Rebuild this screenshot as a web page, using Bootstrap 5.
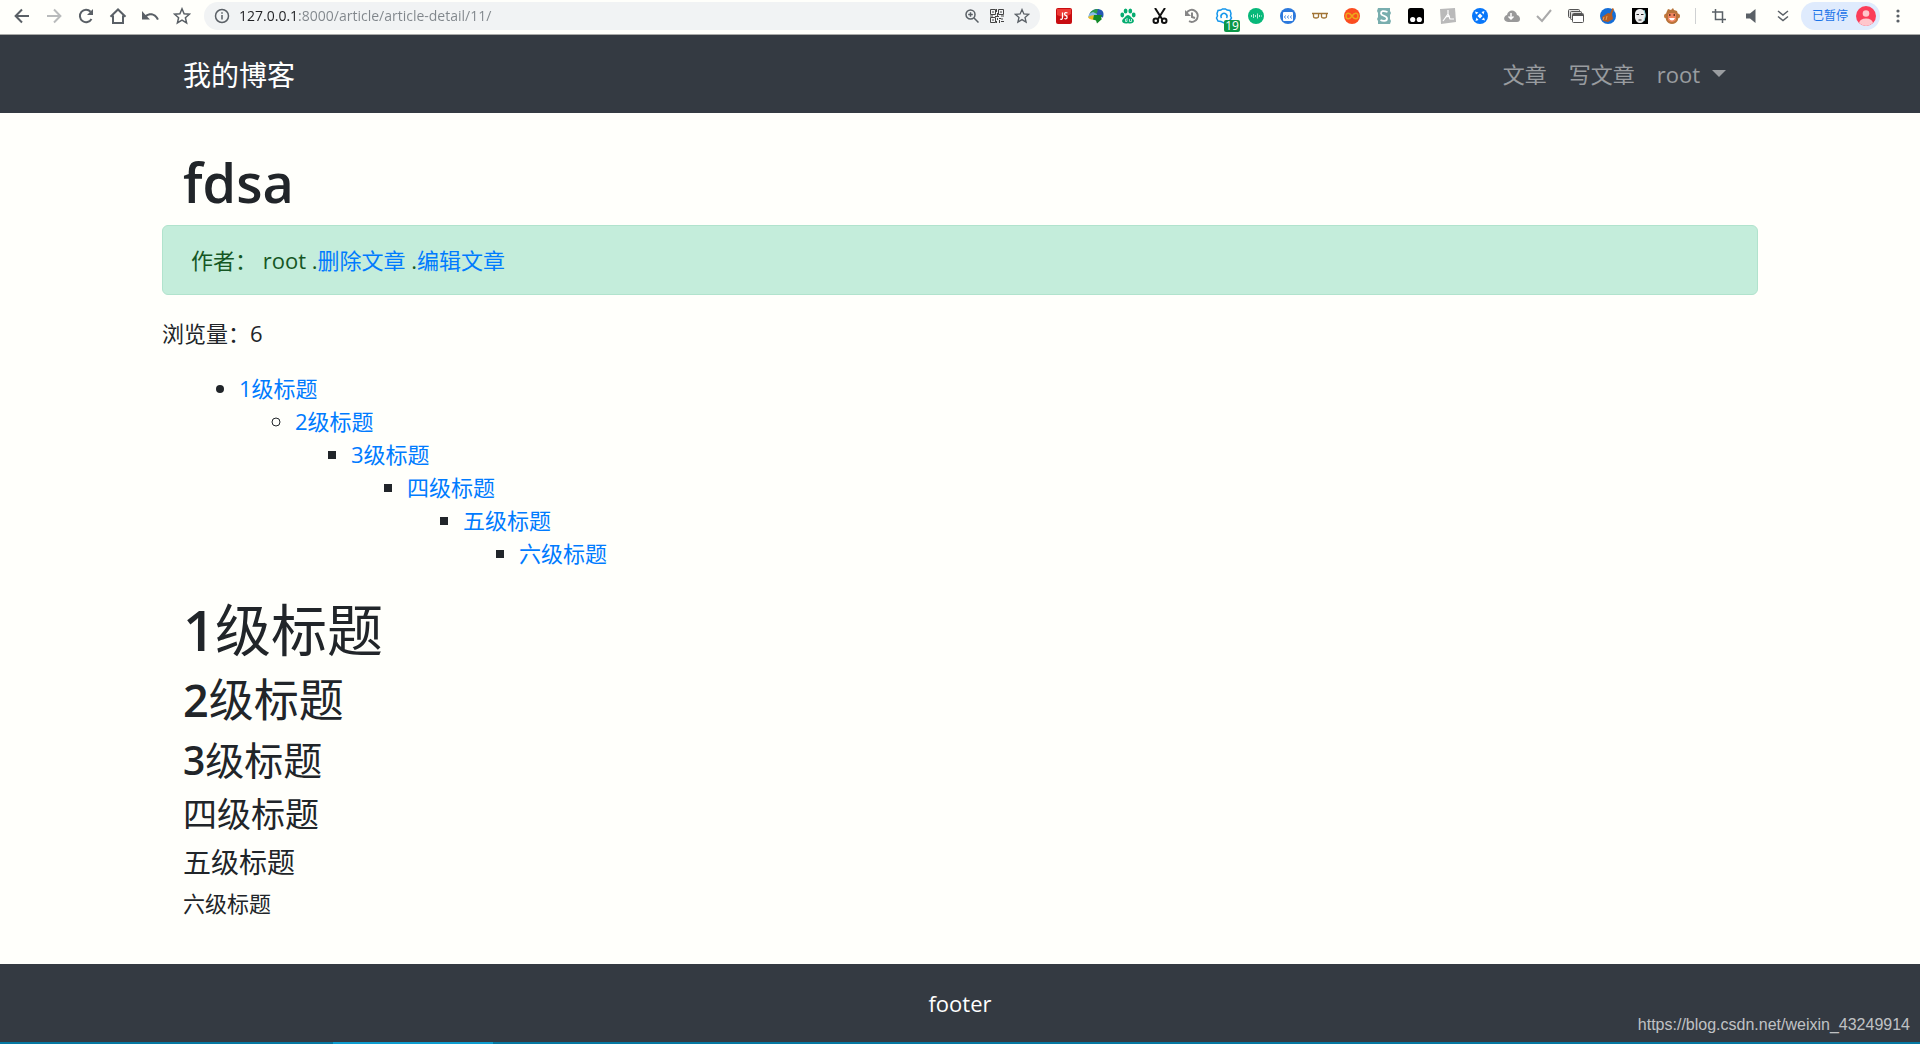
<!DOCTYPE html>
<html lang="zh-CN">
<head>
<meta charset="utf-8">
<meta name="viewport" content="width=device-width, initial-scale=1">
<title>我的博客</title>
<link href="https://cdn.jsdelivr.net/npm/bootstrap@5.3.0/dist/css/bootstrap.min.css" rel="stylesheet">
<style>
:root { --cjk: "Open Sans", "Noto Sans CJK SC", sans-serif; }
body { font-family: var(--cjk); font-size: 22px; line-height: 33px; background: #fffffb; color: #212529; }
a { text-decoration: none; }
.page-link-blue a { color: #007bff; }

/* browser toolbar */
.browser-bar { height: 35px; padding: 0 6px 3px; border-bottom: 1px solid #a9aaa8; background: #fffffb; }
.tool { width: 32px; height: 28px; padding: 0; border: 0; background: none; display: flex; align-items: center; justify-content: center; flex: none; position: relative; }
.tool svg { display: block; }
.line-icon { fill: none; stroke: #5a6066; stroke-width: 2; }
.thin { stroke-width: 1.5; }
.faded { stroke: #b9bbbc; }
.address { height: 28px; margin: 0 8px 0 6px; padding: 0 6px 0 10px; border-radius: 14px; background: #f1f3f4; }
.address .tool { width: 25px; }
.address input { border: 0; outline: 0; background: linear-gradient(90deg, #202124 60px, #80868b 60px); -webkit-background-clip: text; background-clip: text; -webkit-text-fill-color: transparent; font-size: 14px; line-height: 28px; height: 28px; padding: 0; margin-left: 9px; min-width: 0; }
.count { position: absolute; right: 0; bottom: -2px; width: 16px; height: 12px; border-radius: 2px; background: #0c9748; color: #fff; font-size: 12px; line-height: 12px; text-align: center; }
.split { width: 1px; height: 16px; margin: 0 7px; background: #cfd1d2; }
.paused { height: 28px; width: 79px; margin: 0 2px; padding: 0 4px 0 11px; border: 0; border-radius: 14px; background: #dfebfd; color: #1a73e8; font-size: 12px; line-height: 20px; white-space: nowrap; }

/* site */
.site-width { max-width: 1596px; padding: 0 21px; margin: 0 auto; width: 100%; }
.bleed { margin: 0 -21px; }
.site-nav { padding: 11px 0; background: #343a42; }
.site-nav .navbar-brand { font-size: 28px; line-height: 42px; padding: 8px 0 6px; margin: 0; color: #fff; }
.site-nav .navbar-nav .nav-link { font-size: 22px; padding: 11px; color: rgba(255,255,255,.5); }
.site-nav .dropdown-toggle::after { margin-left: 12px; vertical-align: 6px; border-width: 7px; border-bottom: 0; }
.title-1, .title-2, .title-3, .title-4, .title-5, .title-6 { margin: 0 0 11px; font-weight: 400; }
.title-1 { font-size: 56px; line-height: 67px; }
.title-2 { font-size: 45px; line-height: 52px; }
.title-3 { font-size: 39px; line-height: 46px; }
.title-4 { font-size: 34px; line-height: 41px; }
.title-5 { font-size: 28px; line-height: 33px; }
.title-6 { font-size: 22px; line-height: 27px; }
.digit, .post-title { font-weight: 600; }
.post-title { font-size: 54px; padding-top: 36px; margin-bottom: 9px; }
.author { padding: 17px 28px; margin-bottom: 22px; border: 1px solid #b1e3cd; border-radius: 6px; background: #c4eddb; color: #155724; line-height: 34px; }
.views { margin-bottom: 22px; }
.toc { padding: 0 0 26px 21px; }
.toc ul { padding-left: 56px; margin: 0; }
.site-footer { background: #343a42; color: #fff; padding: 23px 0 22px; }
.taskbar { height: 2px; background: #0578a2; }
.taskbar span { width: 160px; margin-left: 333px; background: #0d9dd0; }
.watermark { position: absolute; right: 10px; bottom: 7px; font: 16px/24px "Liberation Sans", sans-serif; color: rgba(255,255,255,.7); }
</style>
</head>
<body class="d-flex flex-column min-vh-100 position-relative">

<div class="browser-bar d-flex align-items-center">
  <button class="tool" aria-label="后退"><svg width="16" height="16" class="line-icon"><path d="M15 8H2M8 1.500 1.600 8 8 14.500"/></svg></button>
  <button class="tool" aria-label="前进"><svg width="16" height="16" class="line-icon faded"><path d="M1 8h13M8 1.500 14.400 8 8 14.500"/></svg></button>
  <button class="tool" aria-label="刷新"><svg width="16" height="16" class="line-icon"><path d="M13.500 11A6.200 6.200 0 1 1 12.600 3.700"/><path d="M15 1v6H9z" fill="#5a6066" stroke="none"/></svg></button>
  <button class="tool" aria-label="主页"><svg width="18" height="16" class="line-icon"><path d="M1.500 8.700 9 1.500l7.500 7.200M4 7.500V15h10V7.500"/></svg></button>
  <button class="tool" aria-label="撤销"><svg width="18" height="12"><path d="M1 1v8.500h8L6 6.500C10 3.800 14 5.500 16 10l1.800-.8C15.500 3.500 9.500 1.500 4.500 5z" fill="#5a6066"/></svg></button>
  <button class="tool" aria-label="收藏夹"><svg width="18" height="18" viewBox="0 0 18 18" class="line-icon thin"><path d="m9 1.800 2.100 4.900 5.300.5-4 3.500 1.200 5.200L9 13.100l-4.600 2.800 1.200-5.200-4-3.500 5.300-.5z"/></svg></button>
  <div class="address d-flex align-items-center flex-grow-1">
    <svg width="16" height="16" class="line-icon thin flex-shrink-0"><circle cx="8" cy="8" r="6.500"/><path d="M8 7v4.500M8 4.200v1.600"/></svg>
    <input class="flex-grow-1" type="text" aria-label="地址" value="127.0.0.1:8000/article/article-detail/11/">
    <button class="tool" aria-label="缩放"><svg width="14" height="14" class="line-icon thin"><circle cx="5.500" cy="5.500" r="4.500"/><path d="m9 9 4.500 4.500M3.200 5.500h4.600M5.500 3.200v4.600"/></svg></button>
    <button class="tool" aria-label="二维码"><svg width="14" height="14" fill="none" stroke="#444"><path d="M.5.500h5v5h-5zM8.500.500h5v5h-5zM.5 8.500h5v5h-5zM2 3h2M10 3h2M2 11h2M6.500 0v3M7.500 4v3M0 7h3M5 7.500h4M11 7h3M7.500 9v2M9 9.500h2M12 9v2M9.500 11v3M11 12.500h3M6.500 12v2"/></svg></button>
    <button class="tool" aria-label="收藏"><svg width="16" height="16" viewBox="0 0 18 18" class="line-icon thin"><path d="m9 1.800 2.100 4.900 5.300.5-4 3.500 1.200 5.200L9 13.100l-4.600 2.800 1.200-5.200-4-3.500 5.300-.5z"/></svg></button>
  </div>
  <button class="tool" aria-label="JS"><svg width="16" height="16"><rect width="16" height="16" rx="2" fill="#c80d10"/><path d="M1 1h14v5q-7 5-14 1z" fill="#ee3a35"/><path d="M4 11q2.500 1 2.500-1.500V4.500M11.500 5C8 3.500 8 7 9.800 7.500s2 4.500-1.500 3" fill="none" stroke="#fff" stroke-width="1.300"/></svg></button>
  <button class="tool" aria-label="下载器"><svg width="16" height="16"><path d="M1 7C3 2 8 0 12 1.500c4 1 4 5 3 8z" fill="#2458b4"/><path d="M2 5q3-4 8-4l-1 4-5 3z" fill="#2d9b48"/><path d="M0 9q1-4 5-5l4 2-1 5q-6 1-8-2z" fill="#88bce9"/><path d="M0 9q4-3 9-1v3q-7 2-9-2z" fill="#ecbd24"/><path d="m6 7 8 0-1 3 1 1-5 4.500-1-3-3-1z" fill="#128a29"/></svg></button>
  <button class="tool" aria-label="百度"><svg width="16" height="16" fill="#06ad70"><ellipse cx="2.300" cy="7" rx="1.900" ry="2.400"/><ellipse cx="5.600" cy="2.900" rx="1.900" ry="2.500"/><ellipse cx="10.300" cy="2.900" rx="1.900" ry="2.500"/><ellipse cx="13.700" cy="7" rx="1.900" ry="2.400"/><path d="M8 7c2 0 3 2.500 5 4 2.500 3-.5 5.500-5 4.300C3.500 16.500.5 14 3 11c2-1.500 3-4 5-4z"/><path d="M5.500 11v2.500H7V10M9.500 11v2.500h2V11" fill="none" stroke="#fff" stroke-width=".7"/></svg></button>
  <button class="tool" aria-label="剪藏"><svg width="16" height="16" fill="none" stroke="#111" stroke-width="2"><path d="m3 0 7 11M13 0 6 11"/><circle cx="3.800" cy="12.700" r="2.300"/><circle cx="12.200" cy="12.700" r="2.300"/></svg></button>
  <button class="tool" aria-label="历史"><svg width="16" height="16" fill="none" stroke="#868686" stroke-width="2"><path d="M2.500 5A6 6 0 1 1 5 13.200M8 4.500V9l3 1"/><path d="M1 2v6h6z" fill="#868686" stroke="none"/></svg></button>
  <button class="tool" aria-label="设置"><svg width="18" height="16" fill="none" stroke="#1697ec" stroke-width="1.500"><path d="m6 2 1.500-1h3L12 2l3 .5 1 3L15.500 8l1 2-2 3-3 .5L9 15l-3-1.500-3-.5-1.500-3 1-2L2 5.500l1-3z"/><path d="M6.500 10a3 3 0 1 1 5 0"/></svg><span class="count">19</span></button>
  <button class="tool" aria-label="音频"><svg width="16" height="16"><circle cx="8" cy="8" r="8" fill="#08b879"/><path d="M3.500 7v2M5.500 6v4M7.500 7v2M9.500 5.500v5M11.500 7v2M13.500 7.500v1" stroke="#b8efd8"/></svg></button>
  <button class="tool" aria-label="窗口"><svg width="16" height="16"><circle cx="8" cy="8" r="8" fill="#2c79dc"/><rect x="3" y="4" width="10" height="9" rx="1" fill="#fff"/><path d="M5.500 7.500 4.500 9l1 1.500M8.500 7.500 7.500 9l1 1.500M11.500 7.500l-1 1.500 1 1.500" fill="none" stroke="#3b82db"/></svg></button>
  <button class="tool" aria-label="阅读"><svg width="16" height="8" fill="none" stroke="#a17435" stroke-width="1.300"><path d="M0 1.500h16M1.500 1.500v3q0 1.500 2.500 1.500t2.500-1.500v-3M9.500 1.500v3Q9.500 6 12 6t2.500-1.500v-3"/></svg></button>
  <button class="tool" aria-label="无限"><svg width="16" height="16"><circle cx="8" cy="8" r="8" fill="#fb4d20"/><path d="M8 8C5 3.500 2 5 2 8s3 4.500 6 0 6-3 6 0-3 4.500-6 0z" fill="none" stroke="#eda61b" stroke-width="1.500"/></svg></button>
  <button class="tool" aria-label="S"><svg width="14" height="16"><path d="M1 0h12v3l1 2-1 2v4l1 2-1 3H1v-3l-1-2 1-2V5L0 3z" fill="#79aeae"/><path d="M10.500 4Q4 1.500 4 5.500C4 8 10 7.500 10 10.500c0 3.500-5 2.500-6.500 1.500" fill="none" stroke="#fff" stroke-width="1.800"/></svg></button>
  <button class="tool" aria-label="脚本"><svg width="16" height="16"><rect width="16" height="16" rx="2.500" fill="#000"/><circle cx="4.700" cy="11.500" r="2.600" fill="#fff"/><circle cx="11.300" cy="11.500" r="2.600" fill="#fff"/></svg></button>
  <button class="tool" aria-label="翻译"><svg width="16" height="16"><path d="m0 1 15-1 1 14-15 2z" fill="#bababa"/><path d="M8 2v4L3 13M8 6l2 5h4M6 9l4-1" fill="none" stroke="#fff" stroke-width="1.200"/></svg></button>
  <button class="tool" aria-label="同步"><svg width="16" height="16"><circle cx="8" cy="8" r="8" fill="#0877fa"/><path d="M8 5.500 10.500 8 8 10.500 5.500 8z" fill="#fff"/><path d="m3 3.500 3.500 1-2.500 2zM12.500 3l-1 3.500-2-2.500zM13 12.500l-3.500-1 2.500-2zM3.500 13l1-3.500 2 2.500z" fill="#fff"/></svg></button>
  <button class="tool" aria-label="云下载"><svg width="16" height="12"><path d="M4 12C-1 12-1 6 3 5c1-6 9-6 10 0 4 1 4 7 0 7z" fill="#999"/><path d="M7 3v5M4.500 6.500 7 9l2.500-2.500" fill="none" stroke="#fff" stroke-width="1.500"/></svg></button>
  <button class="tool" aria-label="检查"><svg width="16" height="14" fill="none" stroke="#aaa" stroke-width="2"><path d="m1 7 5 5L15 1"/></svg></button>
  <button class="tool" aria-label="标签"><svg width="16" height="14" fill="#ddd" stroke="#555"><rect x=".5" y=".5" width="11" height="8" rx="1"/><rect x="2.500" y="2.500" width="11" height="8" rx="1"/><rect x="4.500" y="4.500" width="11" height="9" rx="1" fill="#fff"/><path d="M5 6h10" stroke-width="2"/></svg></button>
  <button class="tool" aria-label="清理"><svg width="16" height="16"><circle cx="8" cy="8" r="8" fill="#156ed7"/><path d="M12.500 0 14 1l-2 5 1 5-5 3-5-1-1-4 6-4 2 .5z" fill="#b55d23"/><path d="m4 9-1 3M7 8l-1 4" stroke="#e4a05c"/></svg></button>
  <button class="tool" aria-label="面具"><svg width="16" height="16"><path d="M0 0h16v16H0z"/><path d="M3 5q1-4 5-4t5 4v5q-1 5-5 5t-5-5z" fill="#eee"/><path d="M4.500 6.500h2.500M9 6.500h2.500M6.500 12h3" stroke="#222"/><path d="M12 2q3 5 0 11" fill="none" stroke="#8ed5d9"/></svg></button>
  <button class="tool" aria-label="猴子"><svg width="16" height="16"><circle cx="2.500" cy="8" r="2.500" fill="#c57a3d"/><circle cx="13.500" cy="8" r="2.500" fill="#c57a3d"/><path d="m4 1 3 1 2-2 1 2 3 1q2 4 1 9-2 4-6 4t-6-4Q1 6 4 1z" fill="#b9743a"/><path d="M4 6q4-2 8 0v6q-4 4-8 0z" fill="#f08560"/><path d="M5 7h1.500M9.500 7H11" stroke="#442113" stroke-width="1.500"/><path d="M5 10h6q-1 2.500-3 2.500T5 10" fill="#fff"/></svg></button>
  <span class="split"></span>
  <button class="tool" aria-label="截图"><svg width="14" height="14" class="line-icon thin"><path d="M0 3h10.500v11M3.500 0v10.500H14"/></svg></button>
  <button class="tool" aria-label="声音"><svg width="10" height="14"><path d="M0 4.500h4L9.500 0v14L4 9.500H0z" fill="#5a6066"/></svg></button>
  <button class="tool" aria-label="展开"><svg width="12" height="12" class="line-icon thin"><path d="m1 1 5 4 5-4M1 6.500l5 4 5-4"/></svg></button>
  <button class="paused d-flex align-items-center justify-content-between">已暂停 <svg width="20" height="20"><circle cx="10" cy="10" r="10" fill="#fb3d59"/><circle cx="10" cy="7.500" r="3.300" fill="#ffc6cc"/><path d="M3 17q1-4.500 7-4.500t7 4.500q-7 6-14 0z" fill="#ffc6cc"/></svg></button>
  <button class="tool" aria-label="菜单"><svg width="4" height="14" fill="#5a6066"><circle cx="2" cy="2" r="1.600"/><circle cx="2" cy="7" r="1.600"/><circle cx="2" cy="12" r="1.600"/></svg></button>
</div>

<nav class="navbar navbar-expand site-nav">
  <div class="site-width d-flex justify-content-between align-items-center">
    <a class="navbar-brand" href="#">我的博客</a>
    <ul class="navbar-nav">
      <li class="nav-item"><a class="nav-link" href="#">文章</a></li>
      <li class="nav-item"><a class="nav-link" href="#">写文章</a></li>
      <li class="nav-item dropdown"><a class="nav-link dropdown-toggle" href="#" role="button" data-bs-toggle="dropdown">root</a></li>
    </ul>
  </div>
</nav>

<main class="site-width flex-grow-1">
  <h1 class="title-1 post-title">fdsa</h1>
  <div class="bleed page-link-blue">
    <div class="alert author">作者： root .<a href="#">删除文章</a> .<a href="#">编辑文章</a></div>
    <p class="views">浏览量：6</p>
    <div class="toc">
      <ul>
        <li><a href="#t1">1级标题</a>
          <ul>
            <li><a href="#t2">2级标题</a>
              <ul>
                <li><a href="#t3">3级标题</a>
                  <ul>
                    <li><a href="#t4">四级标题</a>
                      <ul>
                        <li><a href="#t5">五级标题</a>
                          <ul>
                            <li><a href="#t6">六级标题</a></li>
                          </ul>
                        </li>
                      </ul>
                    </li>
                  </ul>
                </li>
              </ul>
            </li>
          </ul>
        </li>
      </ul>
    </div>
  </div>
  <h1 class="title-1" id="t1"><span class="digit">1</span>级标题</h1>
  <h2 class="title-2" id="t2"><span class="digit">2</span>级标题</h2>
  <h3 class="title-3" id="t3"><span class="digit">3</span>级标题</h3>
  <h4 class="title-4" id="t4">四级标题</h4>
  <h5 class="title-5" id="t5">五级标题</h5>
  <h6 class="title-6" id="t6">六级标题</h6>
</main>

<footer class="site-footer text-center">footer</footer>
<div class="taskbar d-flex"><span></span></div>
<div class="watermark">https://blog.csdn.net/weixin_43249914</div>

<script src="https://cdn.jsdelivr.net/npm/bootstrap@5.3.0/dist/js/bootstrap.bundle.min.js"></script>
</body>
</html>
